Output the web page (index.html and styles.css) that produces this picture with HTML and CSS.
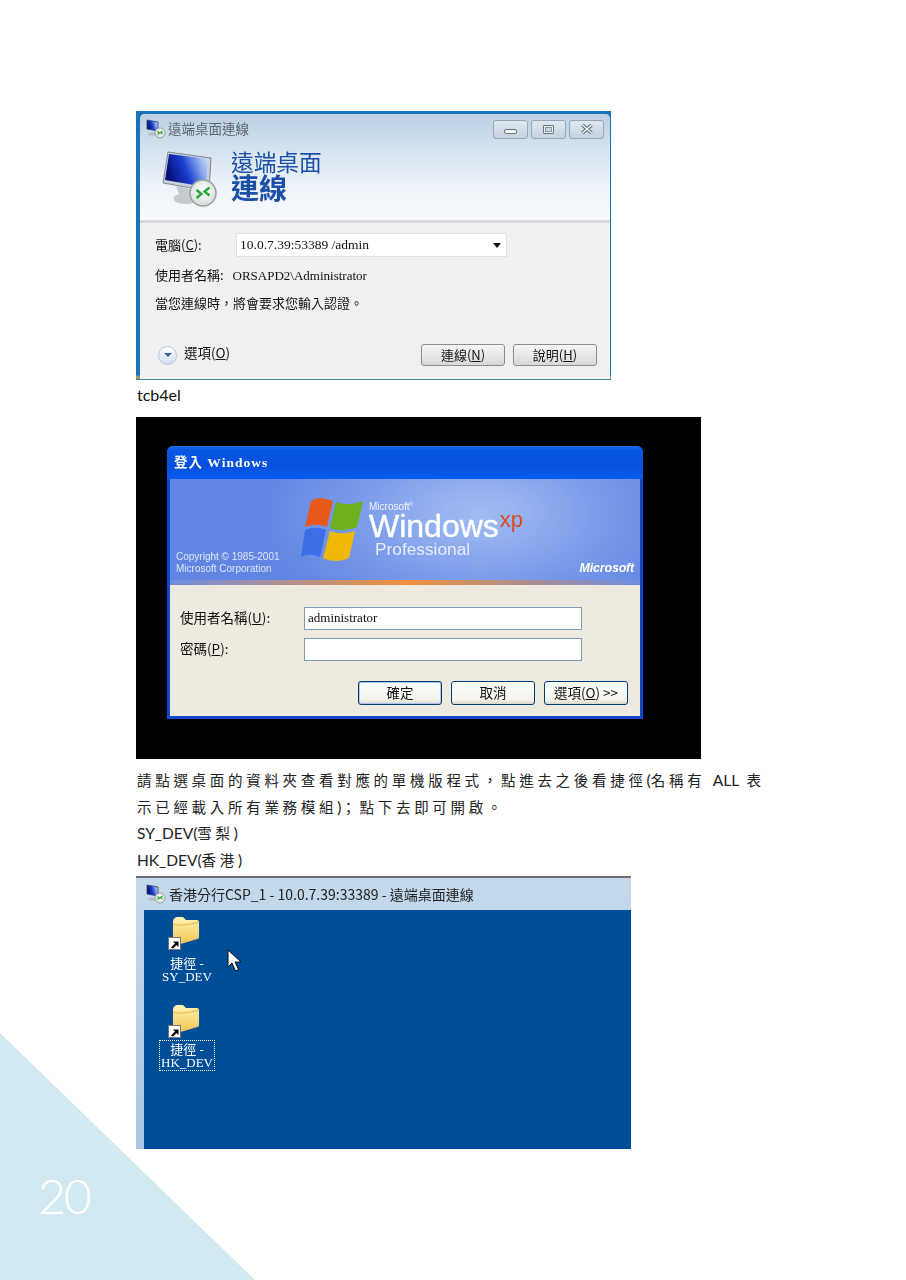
FILE: index.html
```html
<!DOCTYPE html>
<html lang="zh-Hant">
<head>
  <meta charset="UTF-8">
  <title>20</title>
  <link rel="stylesheet" href="styles.css">
</head>
<body>
  <svg class="defs" width="0" height="0">
    <defs>
      <linearGradient id="screen" x1="0" y1="0.3" x2="1" y2="0">
        <stop offset="0" stop-color="#06107e"/>
        <stop offset="0.4" stop-color="#1a3fd0"/>
        <stop offset="0.7" stop-color="#7fa0ea"/>
        <stop offset="1" stop-color="#dbe6f8"/>
      </linearGradient>
      <linearGradient id="folderFill" x1="0" y1="0" x2="0" y2="1">
        <stop offset="0" stop-color="#fff3b8"/>
        <stop offset="1" stop-color="#f2c44c"/>
      </linearGradient>
      <radialGradient id="badge" cx="0.5" cy="0.4" r="0.6">
        <stop offset="0" stop-color="#ffffff"/>
        <stop offset="1" stop-color="#d4dcd8"/>
      </radialGradient>
      <symbol id="rdp-small" viewBox="0 0 20 20">
        <polygon points="1,1 12,3 12,12 1,10" fill="url(#screen)" stroke="#33405c" stroke-width="0.8"/>
        <ellipse cx="7" cy="15" rx="5" ry="1.6" fill="#b5bbc0"/>
        <circle cx="14" cy="14" r="5" fill="url(#badge)" stroke="#8a9490" stroke-width="0.8"/>
        <path d="M11.500 12.500l2 1.500-2 1.500M16.500 12l-2 1.500 2 1.500" fill="none" stroke="#2aa52a" stroke-width="1.200"/>
      </symbol>
      <symbol id="folder" viewBox="0 0 32 32">
        <path d="M5 6c0-3 2-5 5-5h5l3 3h11c1.500 0 2 1 2 2v15c0 1-.5 1.500-1.500 2L9 29c-2 .5-4-1-4-3z" fill="url(#folderFill)"/>
        <path d="M5 8c6 2 16 1 26-2" fill="none" stroke="#e8b93f" stroke-width="1"/>
      </symbol>
      <symbol id="shortcut" viewBox="0 0 13 13">
        <rect x="0.5" y="0.5" width="12" height="12" fill="#fff" stroke="#777"/>
        <path d="M3 10.500l4-4-2-2h5.500v5.500l-2-2-3.500 3.500z" fill="#000"/>
      </symbol>
    </defs>
  </svg>

  <div class="corner"></div>
  <div class="page-number">20</div>

  <main class="page">
    <!-- remote desktop dialog -->
    <section class="rdp-shot">
      <div class="rdp-window">
        <header class="rdp-head">
          <div class="rdp-title">
            <svg class="small-icon" width="20" height="20"><use href="#rdp-small"/></svg>
            <span class="rdp-title-text">遠端桌面連線</span>
            <div class="win-buttons">
              <span class="win-btn"><i class="glyph-min"></i></span>
              <span class="win-btn"><i class="glyph-max"></i></span>
              <span class="win-btn">
                <svg width="14" height="12" viewBox="0 0 14 12">
                  <path d="M2.500 2l9 8M11.500 2l-9 8" fill="none" stroke="#5f6a74" stroke-width="3.600"/>
                  <path d="M2.500 2l9 8M11.500 2l-9 8" fill="none" stroke="#eef2f5" stroke-width="1.600"/>
                </svg>
              </span>
            </div>
          </div>
          <div class="rdp-banner">
            <svg class="monitor" width="56" height="58" viewBox="0 0 56 58">
              <path d="M14 36l14 3 2 7c4 2 5 5 1 7-6 2-17 1-19-3-1-3 2-5 5-6z" fill="#c4cacd"/>
              <polygon points="6,2 49,8 47,41 1,33" fill="#c9d0d8" stroke="#7f8994"/>
              <polygon points="7,4 46,9 44,37 3,30" fill="url(#screen)"/>
              <circle cx="41" cy="43" r="13" fill="url(#badge)" stroke="#9aa3a0" stroke-width="1.500"/>
              <path d="M34.500 40l5 4-5 4M47.500 37.500l-5 4 5 4" fill="none" stroke="#22a834" stroke-width="2.400"/>
            </svg>
            <div class="rdp-heading">
              <div class="heading-top">遠端桌面</div>
              <div class="heading-bottom">連線</div>
            </div>
          </div>
        </header>
        <div class="rdp-rule"></div>
        <div class="rdp-body">
          <div class="rdp-row">
            <span class="rdp-label">電腦(<u>C</u>):</span>
            <div class="combo">
              <span>10.0.7.39:53389 /admin</span>
              <i class="combo-arrow"></i>
            </div>
          </div>
          <div class="rdp-line">使用者名稱: <span class="user-name">ORSAPD2\Administrator</span></div>
          <div class="rdp-line">當您連線時，將會要求您輸入認證。</div>
          <div class="rdp-foot">
            <span class="round-btn"><i></i></span>
            <span class="options">選項(<u>O</u>)</span>
            <span class="rdp-btn first-btn">連線(<u>N</u>)</span>
            <span class="rdp-btn">說明(<u>H</u>)</span>
          </div>
        </div>
      </div>
    </section>

    <p class="caption">tcb4el</p>

    <!-- windows xp login -->
    <section class="xp-shot">
      <div class="xp-dialog">
        <div class="xp-title">登入 Windows</div>
        <div class="xp-banner">
          <div class="xp-copy">Copyright © 1985-2001<br>Microsoft Corporation</div>
          <div class="xp-logo">
            <svg class="xp-flag" width="62" height="68" viewBox="0 0 62 68">
              <path d="M10 4c7-4 14-3 22 0l-6 26c-8-3-15-3-22 0z" fill="#e8591c"/>
              <path d="M35 5c8 3 16 3 27-1l-6 26c-10 4-18 4-27 1z" fill="#6cb01e"/>
              <path d="M4 33c7-3 14-3 21 0l-6 27c-7-3-13-3-19 0z" fill="#3c6ee8"/>
              <path d="M29 34c9 3 16 3 25 0l-6 27c-8 4-18 4-26 0z" fill="#f0b908"/>
            </svg>
            <div class="xp-words">
              <div class="xp-ms">Microsoft<sup>®</sup></div>
              <div class="xp-windows">Windows<span class="xp-mark">xp</span></div>
              <div class="xp-pro">Professional</div>
            </div>
          </div>
          <div class="xp-brand">Microsoft</div>
        </div>
        <div class="xp-strip"></div>
        <div class="xp-body">
          <div class="xp-row">
            <span class="xp-label">使用者名稱(<u>U</u>):</span>
            <div class="xp-input">administrator</div>
          </div>
          <div class="xp-row">
            <span class="xp-label">密碼(<u>P</u>):</span>
            <div class="xp-input"></div>
          </div>
          <div class="xp-buttons">
            <span class="xp-btn xp-default">確定</span>
            <span class="xp-btn">取消</span>
            <span class="xp-btn">選項(<u>O</u>) &gt;&gt;</span>
          </div>
        </div>
      </div>
    </section>

    <div class="notes">
      <p class="cjk-text">請點選桌面的資料夾查看對應的單機版程式，點進去之後看捷徑<span class="latin">(</span>名稱有 <span class="latin">ALL</span> 表</p>
      <p class="cjk-text">示已經載入所有業務模組<span class="latin">)</span>；點下去即可開啟。</p>
      <p class="cjk-text"><span class="latin">SY_DEV(</span>雪梨<span class="latin">)</span></p>
      <p class="cjk-text"><span class="latin">HK_DEV(</span>香港<span class="latin">)</span></p>
    </div>

    <!-- remote desktop session -->
    <section class="desk-shot">
      <div class="desk-title">
        <svg class="small-icon" width="20" height="20"><use href="#rdp-small"/></svg>
        <span>香港分行CSP_1 - 10.0.7.39:33389 - 遠端桌面連線</span>
      </div>
      <div class="desk-area">
        <div class="desk-icon icon-sy">
          <svg class="folder" width="32" height="32"><use href="#folder"/></svg>
          <svg class="shortcut" width="13" height="13"><use href="#shortcut"/></svg>
          <div class="desk-label">捷徑 -<br>SY_DEV</div>
        </div>
        <div class="desk-icon icon-hk">
          <svg class="folder" width="32" height="32"><use href="#folder"/></svg>
          <svg class="shortcut" width="13" height="13"><use href="#shortcut"/></svg>
          <div class="desk-label selected">捷徑 -<br>HK_DEV</div>
        </div>
        <svg class="pointer" width="15" height="24" viewBox="0 0 15 24">
          <path d="M1 1v17l4-4 3.500 8 3-1.500-3.500-7.500h6z" fill="#fff" stroke="#111" stroke-width="1"/>
        </svg>
      </div>
    </section>
  </main>
</body>
</html>
```

FILE: styles.css
```css
* {
  box-sizing: border-box;
}

html, body {
  margin: 0;
  height: 1280px;
  overflow: hidden;
  background: #fff;
}

body {
  position: relative;
  font-family: "Noto Sans CJK TC", sans-serif;
  color: #111;
}

.defs {
  position: absolute;
}

.corner {
  position: absolute;
  left: 0;
  top: 1033px;
  width: 255px;
  height: 247px;
  background: #d2e9f1;
  clip-path: polygon(0 0, 100% 100%, 0 100%);
}

.page-number {
  position: absolute;
  left: 38px;
  top: 1166px;
  font-family: "Lato", sans-serif;
  font-weight: 300;
  font-size: 48px;
  line-height: 60px;
  letter-spacing: -2px;
  color: #fff;
}

.page {
  position: relative;
  padding: 111px 0 0 136px;
}

p {
  margin: 0;
}

u {
  text-underline-offset: 1px;
}

/* first screenshot */
.rdp-shot {
  width: 475px;
  height: 269px;
  padding: 3px 1px 1px 4px;
  background: linear-gradient(#1a72b8, #1a72b8 98%, #c9a04a 99%, #2c7bb8);
  filter: blur(0.35px);
}

.rdp-window {
  display: flex;
  flex-direction: column;
  height: 265px;
  background: #f0f0f0;
  border-radius: 5px 5px 0 0;
  overflow: hidden;
}

.rdp-head {
  height: 106px;
  background: linear-gradient(#b9cfe2, #d3e1ee 30%, #eef3f8 70%, #f8fafc);
}

.rdp-title {
  display: flex;
  align-items: center;
  height: 30px;
  padding: 0 6px 0 6px;
}

.small-icon {
  flex: none;
}

.rdp-title-text {
  margin: 0 0 2px 2px;
  font-size: 13.500px;
  color: #5a6670;
}

.win-buttons {
  display: flex;
  gap: 3px;
  margin-left: auto;
}

.win-btn {
  display: flex;
  align-items: center;
  justify-content: center;
  width: 35px;
  height: 19px;
  border: 1px solid #95a6b5;
  border-radius: 3px;
  background: linear-gradient(#dfe8f0, #c3d2df);
}

.glyph-min {
  width: 13px;
  height: 5px;
  margin-top: 4px;
  border: 1px solid #69747e;
  border-radius: 2px;
  background: #f2f4f6;
}

.glyph-max {
  width: 11px;
  height: 9px;
  border: 1px solid #69747e;
  border-radius: 1px;
  background: #c9d5df;
  box-shadow: inset 0 0 0 1px #eef2f5, inset 0 0 0 2px #8a96a0;
}

.rdp-banner {
  display: flex;
  height: 76px;
  padding: 6px 0 0 22px;
}

.rdp-heading {
  margin-left: 13px;
  color: #1b4fa8;
}

.heading-top {
  font-size: 22.700px;
  line-height: 24px;
  font-weight: 400;
}

.heading-bottom {
  font-size: 28px;
  line-height: 26px;
  font-weight: 700;
}

.rdp-rule {
  height: 3px;
  background: #d6d8d9;
}

.rdp-body {
  display: flex;
  flex-direction: column;
  flex: 1;
  padding: 10px 13px 13px 15px;
  font-size: 13px;
}

.rdp-row {
  display: flex;
  align-items: center;
  height: 24px;
}

.rdp-label {
  width: 81px;
  padding-bottom: 2px;
}

.combo {
  display: flex;
  align-items: center;
  justify-content: space-between;
  width: 271px;
  height: 24px;
  padding: 0 4px 0 3px;
  background: #fff;
  border: 1px solid #e0e0e0;
  font-family: "Liberation Serif", serif;
  font-size: 13.500px;
}

.combo-arrow {
  width: 0;
  height: 0;
  margin-right: 1px;
  border-left: 4px solid transparent;
  border-right: 4px solid transparent;
  border-top: 5px solid #111;
}

.rdp-line {
  height: 20px;
  margin-top: 8px;
  line-height: 20px;
}

.user-name {
  margin-left: 6px;
  font-family: "Liberation Serif", serif;
}

.rdp-foot {
  display: flex;
  align-items: center;
  margin-top: auto;
  height: 22px;
}

.round-btn {
  display: flex;
  align-items: center;
  justify-content: center;
  width: 19px;
  height: 19px;
  margin-left: 3px;
  border: 1px solid #b8c6da;
  border-radius: 50%;
  background: linear-gradient(#fdfeff, #d4def0);
}

.round-btn i {
  width: 0;
  height: 0;
  border-left: 4px solid transparent;
  border-right: 4px solid transparent;
  border-top: 4px solid #3f5f9f;
}

.options {
  margin-left: 7px;
  padding-bottom: 6px;
  font-size: 13.500px;
}

.rdp-btn {
  display: flex;
  align-items: center;
  justify-content: center;
  width: 84px;
  height: 22px;
  margin-left: 8px;
  padding-bottom: 1px;
  border: 1px solid #8c8c8c;
  border-radius: 3px;
  background: linear-gradient(#f6f6f6, #e8e8e8 50%, #d8d8d8);
}

.first-btn {
  margin-left: auto;
}

.caption {
  height: 37px;
  padding-left: 1px;
  font-family: "Lato", sans-serif;
  font-size: 16px;
  line-height: 30px;
  color: #111;
}

/* second screenshot */
.xp-shot {
  width: 565px;
  height: 342px;
  padding: 29px 0 0 31px;
  background: #000;
  filter: blur(0.4px);
}

.xp-dialog {
  width: 476px;
  height: 273px;
  padding: 0 3px 3px;
  background: #0f47cf;
  border-radius: 6px 6px 0 0;
  overflow: hidden;
}

.xp-title {
  height: 33px;
  margin: 0 -3px;
  padding-left: 7px;
  background: linear-gradient(#1f6cf0, #0a58e6 12%, #0650dc 60%, #0a5cf0);
  color: #fff;
  font-family: "Liberation Serif", "Noto Sans CJK TC", serif;
  font-size: 13.500px;
  font-weight: 700;
  line-height: 34px;
  letter-spacing: 1px;
}

.xp-banner {
  position: relative;
  display: flex;
  height: 101px;
  background: radial-gradient(ellipse 220px 120px at 66% 35%, #a3bdf3, #7a9cea 55%, #6185e2);
  color: #fff;
  font-family: "Liberation Sans", sans-serif;
}

.xp-copy {
  width: 131px;
  padding: 72px 0 0 6px;
  font-size: 10px;
  line-height: 12px;
  color: #dfe8fb;
  white-space: nowrap;
}

.xp-logo {
  display: flex;
  padding-top: 18px;
}

.xp-flag {
  flex: none;
}

.xp-words {
  margin: 5px 0 0 6px;
  white-space: nowrap;
}

.xp-ms {
  font-size: 10px;
  line-height: 10px;
  color: #eef3ff;
}

.xp-ms sup {
  font-size: 5px;
  line-height: 0;
}

.xp-windows {
  height: 27px;
  font-size: 32px;
  line-height: 28px;
  -webkit-text-stroke: 0.4px #fff;
}

.xp-mark {
  position: relative;
  top: -10px;
  margin-left: 1px;
  font-size: 22px;
  color: #e0481f;
  -webkit-text-stroke: 0;
}

.xp-pro {
  margin-left: 6px;
  font-size: 17.300px;
  line-height: 20px;
  color: #e6edfd;
}

.xp-brand {
  position: absolute;
  right: 6px;
  bottom: 5px;
  font-size: 12.500px;
  font-weight: 700;
  font-style: italic;
  letter-spacing: -0.2px;
}

.xp-strip {
  height: 5px;
  background: linear-gradient(to right, #6e8de0, #f0913c 50%, #6e8de0);
}

.xp-body {
  height: 131px;
  padding: 22px 12px 0 10px;
  background: #eeeae0;
  font-size: 13.500px;
}

.xp-row {
  display: flex;
  align-items: center;
  height: 23px;
  margin-bottom: 8px;
}

.xp-label {
  width: 124px;
  padding-bottom: 3px;
}

.xp-input {
  width: 278px;
  height: 23px;
  padding-left: 3px;
  background: #fff;
  border: 1px solid #7f9db9;
  font-family: "Liberation Serif", serif;
  font-size: 13px;
  line-height: 20px;
}

.xp-buttons {
  display: flex;
  justify-content: flex-end;
  gap: 9px;
  margin-top: 20px;
}

.xp-btn {
  display: flex;
  align-items: center;
  justify-content: center;
  width: 84px;
  height: 24px;
  padding-bottom: 2px;
  background: linear-gradient(#fff, #f4f3ee 80%, #dcd8ca);
  border: 1px solid #003c74;
  border-radius: 3px;
}

.xp-default {
  box-shadow: inset 0 0 0 1px #a9c4ee;
}

/* text */
.notes {
  padding: 9px 0 1.200px 1px;
  white-space: nowrap;
}

.cjk-text {
  height: 26.700px;
  font-family: "Lato", "Noto Sans CJK TC", sans-serif;
  font-size: 14.500px;
  line-height: 26.700px;
  letter-spacing: 3.700px;
  color: #222;
}

.latin {
  font-size: 15.500px;
  line-height: 1;
  letter-spacing: 0;
}

/* third screenshot */
.desk-shot {
  width: 495px;
  height: 273px;
  border-top: 2px solid #6d6d6d;
  background: linear-gradient(#c5d9ec, #a9c6e2);
  filter: blur(0.3px);
}

.desk-title {
  display: flex;
  align-items: center;
  height: 32px;
  padding: 0 0 0 10px;
  font-size: 14px;
  color: #222;
}

.desk-title span {
  margin-left: 3px;
}

.desk-area {
  position: relative;
  height: 239px;
  margin-left: 8px;
  background: #004e98;
}

.desk-icon {
  position: absolute;
  left: 13px;
  width: 60px;
  text-align: center;
}

.icon-sy {
  top: 6px;
}

.icon-hk {
  top: 94px;
}

.folder {
  display: block;
  margin-left: 11px;
}

.shortcut {
  position: absolute;
  left: 11px;
  top: 21px;
}

.desk-label {
  margin-top: 9px;
  color: #fff;
  font-family: "Liberation Serif", "Noto Sans CJK TC", serif;
  font-size: 13px;
  line-height: 13px;
  white-space: nowrap;
}

.selected {
  margin: 4px 2px 0;
  padding: 2px 0 1px;
  border: 1px dotted #fff;
}

.pointer {
  position: absolute;
  left: 83px;
  top: 39px;
}
```
